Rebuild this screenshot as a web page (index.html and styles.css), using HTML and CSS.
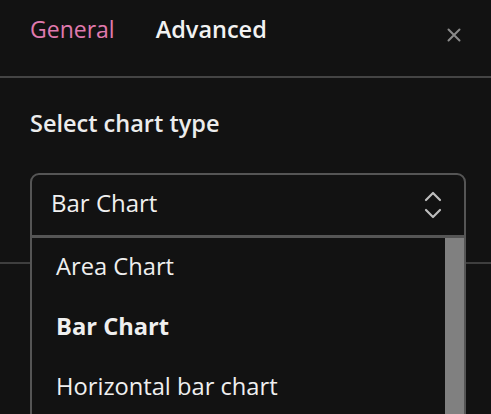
FILE: index.html
```html
<!DOCTYPE html>
<html>
<head>
<meta charset="utf-8">
<link rel="stylesheet" href="styles.css">
</head>
<body>
<div class="panel">
  <div class="header">
    <div class="tabs">
      <span class="tab active">General</span>
      <span class="tab">Advanced</span>
    </div>
    <span class="close">
      <svg width="14" height="14" viewBox="0 0 14 14"><path d="M1.5 1.5 L12.5 12.5 M12.5 1.5 L1.5 12.5" stroke="#8a8a8a" stroke-width="2" stroke-linecap="round" fill="none"/></svg>
    </span>
  </div>
  <div class="section">
    <div class="label">Select chart type</div>
    <div class="select-wrap">
      <div class="select">
        <span class="value">Bar Chart</span>
        <svg class="chev" width="18" height="28" viewBox="0 0 18 28"><path d="M2 9 L9 2 L16 9 M2 19 L9 26 L16 19" stroke="#bdbdbd" stroke-width="2.2" fill="none" stroke-linecap="round" stroke-linejoin="round"/></svg>
      </div>
      <div class="menu">
        <div class="items">
          <div class="item">Area Chart</div>
          <div class="item selected">Bar Chart</div>
          <div class="item">Horizontal bar chart</div>
        </div>
        <div class="scrollbar"></div>
      </div>
    </div>
  </div>
</div>
</body>
</html>
```
FILE: styles.css
```css
html, body {
  margin: 0;
  padding: 0;
  background: #121212;
  overflow: hidden;
}
body {
  font-family: "Open Sans", Lato, sans-serif;
  color: #eeeeee;
  width: 491px;
  height: 414px;
}
.header {
  height: 76px;
  border-bottom: 2px solid #444444;
  display: flex;
  align-items: flex-start;
  justify-content: space-between;
  padding: 0 30px 0 30px;
  box-sizing: content-box;
}
.tabs {
  display: flex;
  gap: 41px;
  padding-top: 14px;
}
.tab {
  font-size: 23.5px;
  font-weight: 600;
  color: #f2f2f2;
  line-height: 30px;
}
.tab.active {
  color: #e07aae;
  font-weight: 500;
  font-size: 23px;
}
.close {
  padding-top: 28px;
  display: flex;
}
.section {
  height: 186px;
  box-sizing: border-box;
  border-bottom: 2px solid #3e3e3e;
  padding: 29px 25px 0 30px;
}
.label {
  font-size: 23.5px;
  font-weight: 600;
  line-height: 32px;
  color: #ececec;
}
.select-wrap {
  position: relative;
  margin-top: 34px;
}
.select {
  height: 64px;
  box-sizing: border-box;
  border: 2px solid #555555;
  border-radius: 9px 9px 0 0;
  display: flex;
  align-items: center;
  justify-content: space-between;
  padding: 0 22px 0 19px;
}
.value {
  font-size: 24px;
  color: #f0f0f0;
  padding-bottom: 5px;
}
.chev {
  display: block;
}
.menu {
  position: absolute;
  left: 0;
  right: 0;
  top: 63px;
  height: 180px;
  background: #121212;
  border: 2px solid #555555;
  border-bottom: none;
  display: flex;
}
.items {
  flex: 1;
}
.item {
  height: 60px;
  box-sizing: border-box;
  display: flex;
  align-items: center;
  padding: 0 0 5px 24px;
  font-size: 23.7px;
  color: #efefef;
}
.item.selected {
  font-weight: 700;
}
.scrollbar {
  width: 19px;
  background: #808080;
}
```
